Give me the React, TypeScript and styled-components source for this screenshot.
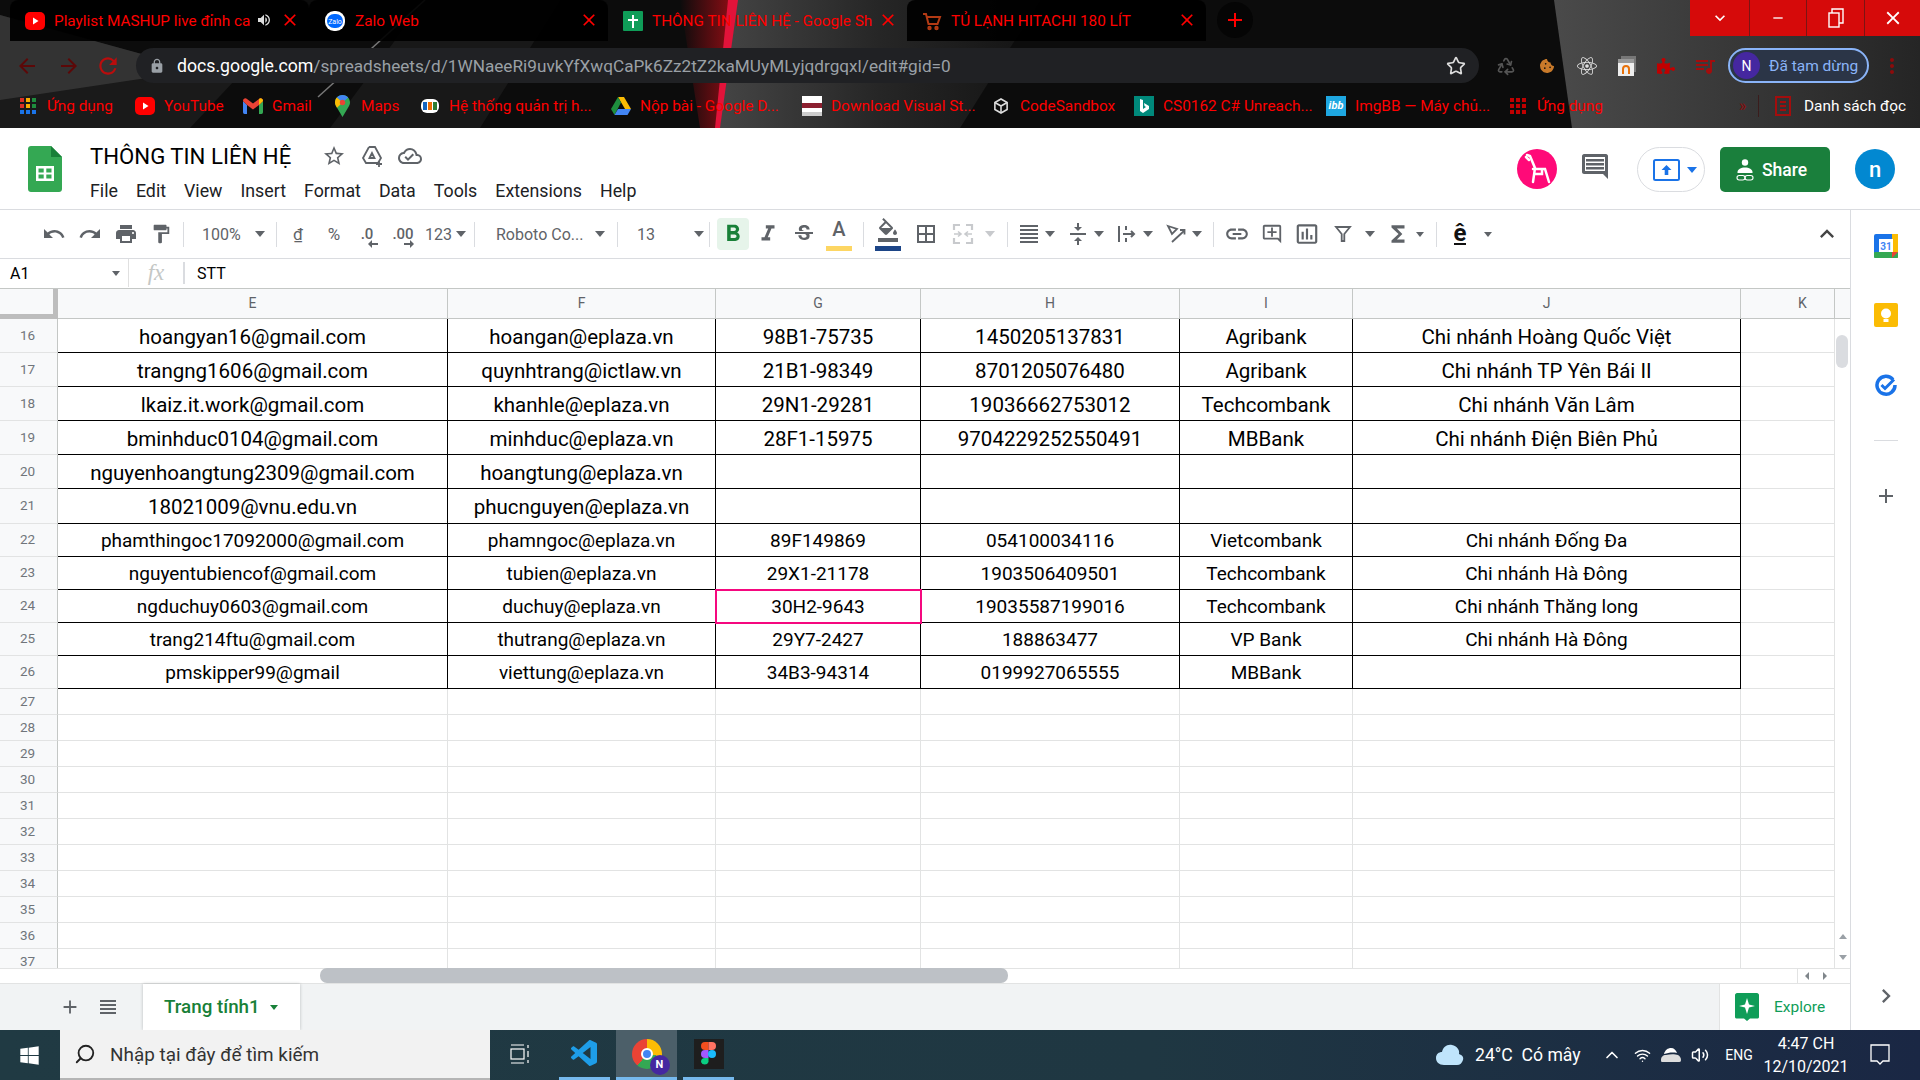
import React from 'react';
import styled, { createGlobalStyle } from 'styled-components';
import {
  MdAdd,
  MdArrowBack,
  MdArrowForward,
  MdBorderAll,
  MdChevronRight,
  MdClose,
  MdFormatAlignJustify,
  MdFormatBold,
  MdFormatColorFill,
  MdFormatItalic,
  MdFormatPaint,
  MdFunctions,
  MdInsertChartOutlined,
  MdKeyboardArrowDown,
  MdKeyboardArrowUp,
  MdLink,
  MdLock,
  MdMoreVert,
  MdOutlineAddComment,
  MdOutlineCloudDone,
  MdOutlineStickyNote2,
  MdPrint,
  MdQueueMusic,
  MdRedo,
  MdRefresh,
  MdRemove,
  MdStarBorder,
  MdStrikethroughS,
  MdUndo,
  MdVerticalAlignCenter,
  MdViewHeadline,
  MdVolumeUp,
} from 'react-icons/md';
import { FaWindows, FaPuzzlePiece, FaReact, FaCookieBite } from 'react-icons/fa';
import { VscVscode } from 'react-icons/vsc';
import { Search, Recycle, Wifi, Volume2, ChevronUp, Star } from 'lucide-react';

const GlobalStyle = createGlobalStyle`
  html, body {
    margin: 0;
    padding: 0;
    width: 1920px;
    height: 1080px;
    overflow: hidden;
    background: #fff;
    font-family: Roboto, "Liberation Sans", sans-serif;
  }
  * { box-sizing: border-box; }
`;

const RED = '#ff0000';
const GRAY = '#5f6368';

const Page = styled.div`
  width: 1920px;
  height: 1080px;
  display: flex;
  flex-direction: column;
`;

/* browser chrome */
const Chrome = styled.header`
  position: relative;
  height: 128px;
  flex: none;
  background: #0c0c0c;
  overflow: hidden;
`;

const Wallpaper = styled.svg`
  position: absolute;
  inset: 0;
`;

const TabStrip = styled.div`
  position: relative;
  display: flex;
  height: 48px;
  padding-left: 10px;
`;

const Tab = styled.div<{ $active?: boolean }>`
  width: 299px;
  height: 41px;
  padding-left: 15px;
  display: flex;
  align-items: center;
  gap: 9px;
  position: relative;
  color: ${RED};
  font-size: 15.3px;
  white-space: nowrap;
  border-radius: 8px 8px 0 0;
  background: ${p => (p.$active ? 'transparent' : 'rgba(0, 0, 0, 0.92)')};
`;

const TabTitle = styled.span<{ $w: number }>`
  width: ${p => p.$w}px;
  overflow: visible;
`;

const TabClose = styled(MdClose)`
  position: absolute;
  left: 270px;
  top: 10px;
  color: ${RED};
`;

const TabAudio = styled(MdVolumeUp)`
  position: absolute;
  left: 246px;
  top: 12px;
  color: #ddd;
`;

const NewTab = styled.div`
  width: 36px;
  height: 36px;
  margin: 2px 0 0 11px;
  border-radius: 50%;
  background: #050505;
  color: ${RED};
  display: flex;
  align-items: center;
  justify-content: center;
`;

const WindowControls = styled.div`
  margin-left: auto;
  height: 36px;
  display: flex;
  background: #d60a0a;
`;

const WindowButton = styled.div<{ $w: number }>`
  width: ${p => p.$w}px;
  border-left: 1px solid #7c1414;
  display: flex;
  align-items: center;
  justify-content: center;
  color: #fff;
  &:first-child { border-left: none; }
`;

const AddressRow = styled.div`
  position: relative;
  height: 35px;
  display: flex;
  align-items: center;
`;

const NavIcon = styled.div<{ $w: number; $c?: string; $ml?: number }>`
  width: ${p => p.$w}px;
  height: 35px;
  flex: none;
  margin-left: ${p => p.$ml || 0}px;
  display: flex;
  align-items: center;
  justify-content: center;
  color: ${p => p.$c || '#5c0808'};
`;

const Omnibox = styled.div`
  width: 1343px;
  height: 35px;
  margin-left: 8px;
  border-radius: 18px;
  background: #202124;
  display: flex;
  align-items: center;
  padding-left: 13px;
  color: #9aa0a6;
  font-size: 17.2px;
  white-space: nowrap;
`;

const Host = styled.span`
  color: #fff;
  font-size: 17.7px;
`;

const Url = styled.span`
  margin-left: 12px;
  flex: 1;
`;

const Profile = styled.div`
  width: 141px;
  height: 35px;
  margin-left: 5px;
  border: 2px solid #8ab4f8;
  border-radius: 18px;
  background: #2b3547;
  display: flex;
  align-items: center;
  gap: 9px;
  padding-left: 3px;
  color: #8ab4f8;
  font-size: 15.5px;
  white-space: nowrap;
`;

const ProfileAvatar = styled.span`
  width: 27px;
  height: 27px;
  border-radius: 50%;
  background: #4527a0;
  color: #fff;
  font-size: 14px;
  display: flex;
  align-items: center;
  justify-content: center;
`;

const BookmarkBar = styled.div`
  position: relative;
  height: 37px;
  margin-top: 4px;
  padding-left: 18px;
  display: flex;
  align-items: center;
`;

const Bookmark = styled.div<{ $w: number; $c?: string; $gap?: number }>`
  width: ${p => p.$w}px;
  flex: none;
  display: flex;
  align-items: center;
  gap: ${p => p.$gap || 9}px;
  color: ${p => p.$c || RED};
  font-size: 15.4px;
  white-space: nowrap;
`;

const FavBox = styled.span`
  width: 20px;
  height: 22px;
  flex: none;
  display: flex;
  align-items: center;
  justify-content: center;
`;

const AppsGrid = styled.span<{ $mono?: boolean }>`
  width: 16px;
  height: 16px;
  display: grid;
  grid-template-columns: repeat(3, 4px);
  grid-auto-rows: 4px;
  gap: 2px;
  i {
    display: block;
    background: ${p => (p.$mono ? '#c00000' : '#d93025')};
  }
  ${p =>
    !p.$mono &&
    `
    i:nth-child(3n + 2) { background: #f9ab00; }
    i:nth-child(3n) { background: #1e8e3e; }
    i:nth-child(n + 7) { background: #1a73e8; }
  `}
`;

const YouTubeBadge = () => (
  <svg width="20" height="20" viewBox="0 0 20 20">
    <rect x="0" y="1" width="20" height="18" rx="5" fill="#ff0000" />
    <path d="M8 6.500l5.500 3.500L8 13.500z" fill="#fff" />
  </svg>
);

const GmailIcon = () => (
  <svg width="20" height="16" viewBox="0 0 20 16">
    <path d="M0 3v11c0 1 .6 2 1.500 2H4V7z" fill="#4285f4" />
    <path d="M20 3v11c0 1-.6 2-1.500 2H16V7z" fill="#34a853" />
    <path d="M0 3l4 4 6 4.500L16 7l4-4c0-2.500-2.500-3.500-4-2l-6 4.500L4 1C2.500-.5 0 .5 0 3z" fill="#ea4335" />
    <path d="M16 1v6l4-4c0-2.500-2.500-3.500-4-2z" fill="#fbbc04" />
  </svg>
);

const MapsIcon = () => (
  <svg width="15" height="22" viewBox="0 0 15 22">
    <path d="M7.500 0C3.300 0 0 3.300 0 7.500c0 2 1 3.800 2 5.300L7.500 22l5.500-9.200c1-1.500 2-3.300 2-5.300C15 3.300 11.700 0 7.500 0z" fill="#34a853" />
    <path d="M7.500 0C5.200 0 3.200 1 1.800 2.600L7.500 7.500 13.200 2.600C11.800 1 9.800 0 7.500 0z" fill="#4285f4" />
    <path d="M0 7.500c0 2 1 3.800 2 5.300L7.500 7.500 1.800 2.600C.7 3.900 0 5.600 0 7.500z" fill="#fbbc04" />
    <circle cx="7.500" cy="7.500" r="2.700" fill="#ea4335" />
  </svg>
);

const FptIcon = () => (
  <svg width="20" height="18" viewBox="0 0 20 18">
    <rect x="1" y="2" width="18" height="14" rx="6" fill="#fff" />
    <rect x="3" y="5" width="4" height="8" fill="#1565c0" />
    <rect x="8" y="5" width="4" height="8" fill="#ef6c00" />
    <rect x="13" y="5" width="4" height="8" fill="#2e7d32" />
  </svg>
);

const DriveIcon = () => (
  <svg width="20" height="18" viewBox="0 0 20 18">
    <path d="M7 0h6l7 12h-6z" fill="#fbbc04" />
    <path d="M7 0l3 5.500L3.500 18 0 12z" fill="#1e8e3e" />
    <path d="M3.500 18L7 12h13l-3.500 6z" fill="#4285f4" />
  </svg>
);

const DownloadThumb = () => (
  <svg width="20" height="20" viewBox="0 0 20 20">
    <rect width="20" height="20" fill="#fff" />
    <rect y="7" width="20" height="5" fill="#8c2030" />
    <rect y="16" width="20" height="4" fill="#ccc" />
  </svg>
);

const SandboxIcon = () => (
  <svg width="14" height="16" viewBox="0 0 16 18" fill="none" stroke="#ddd" strokeWidth="1.800">
    <path d="M8 1l7 4v8l-7 4-7-4V5z" />
    <path d="M1 5l7 4 7-4M8 9v8" />
  </svg>
);

const BingIcon = () => (
  <svg width="20" height="20" viewBox="0 0 20 20">
    <rect width="20" height="20" fill="#00897b" />
    <path d="M6 3l3 1v9l3-2-1.500-1L10 7l5 3v3l-6 4-3-2z" fill="#fff" />
  </svg>
);

const IbbBadge = styled.span`
  width: 20px;
  height: 20px;
  background: #1ea7e1;
  color: #fff;
  font-size: 11px;
  font-style: italic;
  font-weight: 700;
  display: flex;
  align-items: center;
  justify-content: center;
`;

const ReadingIcon = () => (
  <svg width="18" height="20" viewBox="0 0 18 20" fill="none" stroke="#a30d0d" strokeWidth="2">
    <rect x="2" y="1" width="14" height="18" />
    <path d="M6 6h6M6 10h6M6 14h6" />
  </svg>
);

const RestoreIcon = () => (
  <svg width="16" height="20" viewBox="0 0 16 20" fill="none" stroke="#fff" strokeWidth="1.400">
    <rect x="1" y="5" width="10" height="14" />
    <path d="M4 5V1h11v14h-4" />
  </svg>
);

const ExtWindowIcon = () => (
  <svg width="18" height="20" viewBox="0 0 18 20">
    <rect x="3" y="0" width="15" height="16" fill="#777" />
    <rect x="0" y="3" width="16" height="17" fill="#eee" />
    <rect x="0" y="3" width="16" height="4" fill="#999" />
    <path d="M4 18v-5a4 4 0 0 1 8 0v5h-2v-5a2 2 0 0 0-4 0v5z" fill="#e8710a" />
  </svg>
);

const Overflow = styled.span`
  width: 19px;
  color: #8c0b0b;
  font-size: 16px;
`;

const BarDivider = styled.span`
  width: 1px;
  height: 22px;
  background: #3a1c1c;
  margin-right: 14px;
`;

const ChromeTabIcon = () => (
  <svg width="20" height="20" viewBox="0 0 20 20" fill="none" stroke="#b33a14" strokeWidth="2">
    <path d="M1 3h3l2.500 10h9L18 6H5" />
    <circle cx="7.500" cy="17" r="1.200" />
    <circle cx="14.500" cy="17" r="1.200" />
  </svg>
);

const ZaloIcon = () => (
  <svg width="22" height="22" viewBox="0 0 22 22">
    <rect x="1" y="1" width="20" height="20" rx="9" fill="#fff" />
    <rect x="3" y="4" width="16" height="14" rx="7" fill="#0068ff" />
    <text x="11" y="13.500" fontSize="7" fill="#fff" textAnchor="middle" fontFamily="Roboto">Zalo</text>
  </svg>
);

const SheetFavicon = () => (
  <svg width="20" height="20" viewBox="0 0 20 20">
    <rect width="20" height="20" rx="1" fill="#0f9d58" />
    <path d="M9 4h2v4h4v2h-4v7H9v-7H5V8h4z" fill="#fff" />
  </svg>
);

/* docs header */
const DocHeader = styled.div`
  height: 82px;
  flex: none;
  display: flex;
  padding: 18px 25px 0 28px;
  border-bottom: 1px solid #dadce0;
  background: #fff;
`;

const TitleColumn = styled.div`
  margin: -2px 0 0 28px;
  display: flex;
  flex-direction: column;
`;

const TitleRow = styled.div`
  height: 24px;
  display: flex;
  align-items: center;
  color: ${GRAY};
`;

const DocTitle = styled.span`
  width: 225px;
  color: #000;
  font-size: 22.2px;
  white-space: nowrap;
`;

const TitleIcon = styled.span`
  width: 38px;
  display: flex;
  justify-content: center;
`;

const MenuRow = styled.nav`
  display: flex;
  gap: 18px;
  margin-top: 12px;
  color: #202124;
  font-size: 17.8px;
`;

const HeaderActions = styled.div`
  margin-left: auto;
  display: flex;
  align-items: flex-start;
`;

const Avatar = styled.div<{ $bg: string }>`
  width: 40px;
  height: 40px;
  margin-top: 3px;
  border-radius: 50%;
  background: ${p => p.$bg};
  color: #fff;
  font-size: 22px;
  font-weight: 500;
  display: flex;
  align-items: center;
  justify-content: center;
`;

const CommentButton = styled.div`
  width: 32px;
  margin: 8px 0 0 25px;
  display: flex;
`;

const PresentButton = styled.div`
  width: 68px;
  height: 45px;
  margin: 1px 0 0 23px;
  border: 1px solid #dadce0;
  border-radius: 23px;
  display: flex;
  align-items: center;
  padding-left: 15px;
  gap: 7px;
`;

const ShareButton = styled.div`
  width: 110px;
  height: 45px;
  margin: 1px 25px 0 15px;
  border-radius: 5px;
  background: #1a7f3c;
  color: #fff;
  font-size: 17.5px;
  font-weight: 500;
  display: flex;
  align-items: center;
  padding-left: 16px;
  gap: 8px;
`;

/* main area */
const Main = styled.div`
  flex: 1;
  min-height: 0;
  display: flex;
`;

const Workspace = styled.div`
  width: 1851px;
  display: flex;
  flex-direction: column;
  border-right: 1px solid #dadce0;
`;

const Toolbar = styled.div`
  height: 49px;
  flex: none;
  display: flex;
  align-items: center;
  padding-left: 36px;
  border-bottom: 1px solid #dadce0;
  color: ${GRAY};
`;

const Tool = styled.div<{ $w: number; $ml?: number; $faint?: boolean }>`
  width: ${p => p.$w}px;
  margin-left: ${p => p.$ml || 0}px;
  height: 32px;
  flex: none;
  position: relative;
  display: flex;
  align-items: center;
  justify-content: center;
  color: ${p => (p.$faint ? '#c8cacd' : GRAY)};
  font-size: 17px;
`;

const BoldTool = styled(Tool)`
  background: #e6f4ea;
  border-radius: 4px;
  color: #188038;
`;

const Sep = styled.span<{ $ml?: number }>`
  width: 1px;
  height: 25px;
  flex: none;
  margin-left: ${p => p.$ml || 0}px;
  background: #dadce0;
`;

const Select = styled.div<{ $w: number; $pl: number; $pr: number }>`
  width: ${p => p.$w}px;
  padding: 0 ${p => p.$pr}px 0 ${p => p.$pl}px;
  flex: none;
  display: flex;
  align-items: center;
  justify-content: space-between;
  color: ${GRAY};
  font-size: 16px;
  white-space: nowrap;
`;

const Caret = styled.span<{ $small?: boolean; $light?: boolean; $c?: string }>`
  width: 0;
  height: 0;
  flex: none;
  border-style: solid;
  border-color: ${p => p.$c || (p.$light ? '#c8cacd' : GRAY)} transparent transparent;
  border-width: ${p => (p.$small ? '5px 4px 0' : '6px 5.5px 0')};
`;

const CaretTool = styled.div<{ $ml?: number }>`
  width: 8px;
  margin-left: ${p => p.$ml || 0}px;
  flex: none;
  display: flex;
  justify-content: center;
`;

const ArrowDecimal = styled.span`
  position: relative;
  font-size: 15px;
  font-weight: 500;
`;

const DecimalArrow = styled.svg`
  position: absolute;
  left: 53%;
  bottom: 2px;
`;

const ColorBar = styled.span<{ $c: string }>`
  position: absolute;
  left: 50%;
  bottom: -1px;
  width: 26px;
  height: 5px;
  margin-left: -13px;
  background: ${p => p.$c};
`;

const TextColor = styled.span`
  position: relative;
  top: -5px;
  font-size: 20px;
  font-weight: 500;
`;

const InputTool = styled.span`
  color: #111;
  font-size: 24px;
  font-weight: 700;
  border-bottom: 2px solid #111;
  line-height: 20px;
`;

const CollapseTool = styled.div`
  margin-left: auto;
  width: 40px;
  display: flex;
  justify-content: center;
  margin-right: 3px;
  color: #444;
`;

const FormulaBar = styled.div`
  height: 30px;
  flex: none;
  display: flex;
  align-items: center;
  padding-bottom: 1px;
  border-bottom: 1px solid #c4c7c5;
  font-size: 16px;
  color: #000;
`;

const NameBox = styled.div`
  width: 129px;
  height: 100%;
  padding: 0 8px 0 10px;
  display: flex;
  align-items: center;
  justify-content: space-between;
  border-right: 1px solid #e0e0e0;
`;

const FxMark = styled.span`
  width: 54px;
  text-align: center;
  color: #c4c7c5;
  font-family: "Liberation Serif", serif;
  font-size: 23px;
  font-style: italic;
`;

const FxDivider = styled.span`
  width: 2px;
  height: 22px;
  background: #dadce0;
  margin-right: 12px;
`;

const GridArea = styled.div`
  height: 679px;
  flex: none;
  display: flex;
`;

const SheetColumn = styled.div`
  width: 1835px;
  flex: none;
  overflow: hidden;
`;

const Row = styled.div<{ $h: number }>`
  height: ${p => p.$h}px;
  display: grid;
  grid-template-columns: 58px 390px 268px 205px 259px 173px 388px 94px;
`;

const Corner = styled.div`
  background: #f8f9fa;
  border-right: 5px solid #bdbdbd;
  border-bottom: 5px solid #bdbdbd;
`;

const ColHead = styled.div<{ $shift?: number }>`
  background: #f8f9fa;
  border-right: 1px solid #c4c7c5;
  border-bottom: 1px solid #c4c7c5;
  color: ${GRAY};
  font-size: 14px;
  display: flex;
  align-items: center;
  justify-content: center;
  padding-bottom: 1px;
  padding-left: ${p => p.$shift || 0}px;
`;

const RowHead = styled.div`
  background: #f8f9fa;
  border-right: 1px solid #c4c7c5;
  border-bottom: 1px solid #e2e3e3;
  color: #70757a;
  font-size: 13.5px;
  display: flex;
  align-items: center;
  justify-content: center;
  padding: 0 2px 2px 0;
`;

const Cell = styled.div<{ $line?: boolean; $small?: boolean; $picked?: boolean }>`
  position: relative;
  border-right: 1px solid ${p => (p.$line ? '#000' : '#e2e3e3')};
  border-bottom: ${p => (p.$line ? '1px solid #000' : '1px solid #e2e3e3')};
  outline: ${p => (p.$picked ? '2px solid #f5087f' : 'none')};
  outline-offset: -1px;
  z-index: ${p => (p.$picked ? 1 : 0)};
  color: #000;
  font-size: ${p => (p.$small ? 19 : 20.5)}px;
  display: flex;
  align-items: center;
  justify-content: center;
  padding-top: ${p => (p.$small ? 0 : 2)}px;
  white-space: nowrap;
`;

const VScroll = styled.div`
  width: 15px;
  flex: none;
  display: flex;
  flex-direction: column;
`;

const VHead = styled.div`
  height: 30px;
  flex: none;
  background: #f8f9fa;
  border-bottom: 1px solid #c4c7c5;
`;

const VTrack = styled.div`
  flex: 1;
  display: flex;
  flex-direction: column;
`;

const VThumb = styled.div`
  width: 12px;
  height: 33px;
  margin: 16px 0 0 1px;
  border-radius: 6px;
  background: #dadce0;
`;

const VArrows = styled.div`
  margin-top: auto;
  display: flex;
  flex-direction: column;
  align-items: center;
  gap: 16px;
  padding-bottom: 8px;
`;

const HScroll = styled.div`
  height: 15px;
  flex: none;
  display: flex;
  border-top: 1px solid #e2e3e3;
`;

const HThumb = styled.div`
  width: 688px;
  height: 15px;
  margin: -1px 0 0 320px;
  border-radius: 7px;
  background: #bdc1c6;
`;

const HArrows = styled.div`
  margin-left: auto;
  width: 53px;
  display: flex;
  align-items: center;
  border-left: 1px solid #e2e3e3;
  color: #80868b;
`;

const HArrowBox = styled.div`
  width: 18px;
  display: flex;
  justify-content: center;
`;

const ArrowH = styled.span<{ $left?: boolean }>`
  width: 0;
  height: 0;
  border-style: solid;
  border-color: transparent;
  border-width: 4px 0 4px 4px;
  border-left-color: #80868b;
  transform: ${p => (p.$left ? 'rotate(180deg)' : 'none')};
`;

const SheetBar = styled.div`
  flex: 1;
  display: flex;
  background: #f1f3f4;
  border-top: 1px solid #e2e3e3;
  color: ${GRAY};
`;

const SheetTool = styled.div<{ $w: number }>`
  width: ${p => p.$w}px;
  display: flex;
  align-items: center;
  justify-content: flex-end;
`;

const SheetTab = styled.div`
  width: 157px;
  margin-left: 23px;
  background: #fff;
  box-shadow: 0 0 3px rgba(60, 64, 67, 0.3);
  display: flex;
  align-items: center;
  padding-left: 21px;
  gap: 10px;
  color: #188038;
  font-size: 18.8px;
  font-weight: 500;
  white-space: nowrap;
`;

const ExploreBox = styled.div`
  margin-left: auto;
  width: 131px;
  background: #fff;
  border-left: 1px solid #e2e3e3;
  display: flex;
  align-items: center;
  padding-left: 15px;
  gap: 15px;
  color: #0f9d58;
  font-size: 15.5px;
`;

const SidePanel = styled.aside`
  flex: 1;
  display: flex;
  flex-direction: column;
  align-items: center;
  padding-top: 24px;
  color: #5f6368;
`;

const SideIcon = styled.div<{ $mt: number }>`
  margin-top: ${p => p.$mt}px;
  display: flex;
`;

const SideRule = styled.div`
  width: 24px;
  height: 1px;
  margin-top: 43px;
  background: #dadce0;
`;

const SideChevron = styled.div`
  margin-top: auto;
  padding-bottom: 20px;
  display: flex;
`;

/* windows taskbar */
const Taskbar = styled.footer`
  height: 50px;
  flex: none;
  display: flex;
  align-items: center;
  background: linear-gradient(90deg, #203a43 0%, #1f3742 60%, #1a2744 100%);
  color: #fff;
`;

const StartButton = styled.div`
  width: 60px;
  display: flex;
  justify-content: center;
  padding-right: 2px;
`;

const SearchBox = styled.div`
  width: 430px;
  height: 50px;
  background: #f2f2f2;
  border-bottom: 2px solid #b5b5b5;
  display: flex;
  align-items: center;
  gap: 14px;
  padding-left: 14px;
  color: #333;
  font-size: 18.9px;
  white-space: nowrap;
`;

const TaskButton = styled.div<{ $on?: boolean; $w: number; $ml?: number; $bar?: boolean }>`
  width: ${p => p.$w}px;
  height: 50px;
  margin-left: ${p => p.$ml || 0}px;
  background: ${p => (p.$on ? '#4c5f69' : 'transparent')};
  border-bottom: 3px solid ${p => (p.$bar ? '#76b9ed' : 'transparent')};
  display: flex;
  align-items: center;
  justify-content: center;
`;

const ChromeLogo = styled.div`
  position: relative;
  width: 30px;
  height: 30px;
  border-radius: 50%;
  background: conic-gradient(#fbbc04 0 100deg, #34a853 100deg 220deg, #ea4335 220deg 360deg);
  &::before {
    content: '';
    position: absolute;
    inset: 9px;
    border-radius: 50%;
    background: #4285f4;
    border: 2px solid #fff;
  }
`;

const ChromeBadge = styled.span`
  position: absolute;
  right: -8px;
  bottom: -6px;
  width: 20px;
  height: 20px;
  border-radius: 50%;
  background: #4527a0;
  font-size: 11px;
  font-weight: 700;
  display: flex;
  align-items: center;
  justify-content: center;
`;

const FigmaTile = styled.div`
  width: 30px;
  height: 30px;
  background: #1e1e1e;
  display: flex;
  align-items: center;
  justify-content: center;
`;

const Tray = styled.div`
  margin-left: auto;
  display: flex;
  align-items: center;
  font-size: 17.6px;
`;

const TrayItem = styled.div<{ $w: number; $center?: boolean }>`
  width: ${p => p.$w}px;
  display: flex;
  align-items: center;
  justify-content: ${p => (p.$center ? 'center' : 'flex-start')};
  white-space: nowrap;
`;

const EngLabel = styled(TrayItem)`
  font-size: 14px;
`;

const Clock = styled.div`
  width: 86px;
  display: flex;
  flex-direction: column;
  align-items: center;
  gap: 6px;
  font-size: 16px;
  line-height: 17px;
  white-space: nowrap;
`;

const BOOKMARKS: { w: number; label: string; icon: React.ReactNode; c?: string }[] = [
  { w: 117, label: 'Ứng dụng', icon: <AppsGrid><i /><i /><i /><i /><i /><i /><i /><i /><i /></AppsGrid> },
  { w: 108, label: 'YouTube', icon: <YouTubeBadge /> },
  { w: 89, label: 'Gmail', icon: <GmailIcon /> },
  { w: 88, label: 'Maps', icon: <MapsIcon /> },
  { w: 191, label: 'Hệ thống quản trị h...', icon: <FptIcon /> },
  { w: 191, label: 'Nộp bài - Google D...', icon: <DriveIcon /> },
  { w: 189, label: 'Download Visual St...', icon: <DownloadThumb /> },
  { w: 143, label: 'CodeSandbox', icon: <SandboxIcon /> },
  { w: 192, label: 'CS0162 C# Unreach...', icon: <BingIcon /> },
  { w: 182, label: 'ImgBB — Máy chủ...', icon: <IbbBadge>ibb</IbbBadge> },
  { w: 231, label: 'Ứng dụng', icon: <AppsGrid $mono><i /><i /><i /><i /><i /><i /><i /><i /><i /></AppsGrid> },
];

const MENU = ['File', 'Edit', 'View', 'Insert', 'Format', 'Data', 'Tools', 'Extensions', 'Help'];
const COLUMNS = ['E', 'F', 'G', 'H', 'I', 'J', 'K'];

const DATA: [number, string[]][] = [
  [16, ['hoangyan16@gmail.com', 'hoangan@eplaza.vn', '98B1-75735', '1450205137831', 'Agribank', 'Chi nhánh Hoàng Quốc Việt']],
  [17, ['trangng1606@gmail.com', 'quynhtrang@ictlaw.vn', '21B1-98349', '8701205076480', 'Agribank', 'Chi nhánh TP Yên Bái II']],
  [18, ['lkaiz.it.work@gmail.com', 'khanhle@eplaza.vn', '29N1-29281', '19036662753012', 'Techcombank', 'Chi nhánh Văn Lâm']],
  [19, ['bminhduc0104@gmail.com', 'minhduc@eplaza.vn', '28F1-15975', '9704229252550491', 'MBBank', 'Chi nhánh Điện Biên Phủ']],
  [20, ['nguyenhoangtung2309@gmail.com', 'hoangtung@eplaza.vn', '', '', '', '']],
  [21, ['18021009@vnu.edu.vn', 'phucnguyen@eplaza.vn', '', '', '', '']],
  [22, ['phamthingoc17092000@gmail.com', 'phamngoc@eplaza.vn', '89F149869', '054100034116', 'Vietcombank', 'Chi nhánh Đống Đa']],
  [23, ['nguyentubiencof@gmail.com', 'tubien@eplaza.vn', '29X1-21178', '1903506409501', 'Techcombank', 'Chi nhánh Hà Đông']],
  [24, ['ngduchuy0603@gmail.com', 'duchuy@eplaza.vn', '30H2-9643', '19035587199016', 'Techcombank', 'Chi nhánh Thăng long']],
  [25, ['trang214ftu@gmail.com', 'thutrang@eplaza.vn', '29Y7-2427', '188863477', 'VP Bank', 'Chi nhánh Hà Đông']],
  [26, ['pmskipper99@gmail', 'viettung@eplaza.vn', '34B3-94314', '0199927065555', 'MBBank', '']],
];

const rowHeight = (n: number) => (n === 21 ? 35 : n <= 20 ? 34 : 33);
const EMPTY_ROWS = [27, 28, 29, 30, 31, 32, 33, 34, 35, 36, 37];

const SheetsLogo = () => (
  <svg width="34" height="46" viewBox="0 0 34 46">
    <path d="M3 0h20l11 11v32c0 1.700-1.300 3-3 3H3c-1.700 0-3-1.300-3-3V3c0-1.700 1.300-3 3-3z" fill="#34a853" />
    <path d="M23 0l11 11H23z" fill="#188038" />
    <path d="M8 20h18v15H8zm2.500 2.500v4h5.200v-4zm7.800 0v4h5.200v-4zm-7.800 6v4h5.200v-4zm7.800 0v4h5.200v-4z" fill="#fff" fillRule="evenodd" />
  </svg>
);

const MoveIcon = () => (
  <svg width="24" height="24" viewBox="0 0 24 24" fill="none" stroke={GRAY} strokeWidth="1.800">
    <path d="M9 3h6l6 11-3 5h-5M9 3L3 14l3 5h7M9.500 14l2.500-5 2.500 5z" />
    <path d="M19 17v6M16 20h6" />
  </svg>
);

const GiraffeIcon = () => (
  <svg width="30" height="32" viewBox="0 0 30 32" fill="none" stroke="#fff" strokeWidth="2.500" strokeLinecap="round">
    <path d="M5 2l3 1 5 12-2 14M11 16h12l4 13M20 17v4h-6" />
    <path d="M4 4l3 3" />
  </svg>
);

const CommentIcon = () => (
  <svg width="26" height="25" viewBox="0 0 26 25">
    <path d="M2 0h22c1 0 2 1 2 2v23l-5-5H2c-1 0-2-1-2-2V2C0 1 1 0 2 0z" fill={GRAY} />
    <rect x="3" y="3" width="20" height="14" fill="#fff" />
    <rect x="4" y="5" width="18" height="2.500" fill={GRAY} />
    <rect x="4" y="9" width="18" height="2.500" fill={GRAY} />
    <rect x="4" y="13" width="18" height="2.500" fill={GRAY} />
  </svg>
);

const PresentIcon = () => (
  <svg width="27" height="22" viewBox="0 0 27 22" fill="none">
    <rect x="1" y="1" width="25" height="20" rx="1.500" stroke="#1a73e8" strokeWidth="2" />
    <path d="M13.500 6l5 5h-3.200v5h-3.600v-5H8.500z" fill="#1a73e8" />
  </svg>
);

const ShareIcon = () => (
  <svg width="18" height="22" viewBox="0 0 18 22" fill="none">
    <circle cx="9" cy="3.500" r="3.200" fill="#fff" />
    <path d="M1.500 13c0-2.500 3.500-4.500 7.500-4.500s7.500 2 7.500 4.500v1h-15z" fill="#fff" />
    <rect x="1" y="16.500" width="8" height="4.500" rx="2.200" stroke="#fff" strokeWidth="1.100" />
    <rect x="9" y="16.500" width="8" height="4.500" rx="2.200" stroke="#fff" strokeWidth="1.100" />
  </svg>
);

const MergeIcon = () => (
  <svg width="24" height="24" viewBox="0 0 24 24" fill="none" stroke="#c8cacd" strokeWidth="2.200">
    <path d="M3 8V3h6M15 3h6v5M21 16v5h-6M9 21H3v-5" />
    <path d="M3 12h6M7 9.500l3 2.500-3 2.500M21 12h-6M17 9.500L14 12l3 2.500" strokeWidth="1.600" />
  </svg>
);

const WrapIcon = () => (
  <svg width="20" height="20" viewBox="0 0 20 20" fill="none" stroke={GRAY} strokeWidth="2">
    <path d="M2 2v16" />
    <path d="M9 2v4M9 14v4" />
    <path d="M6 10h11" />
    <path d="M14 7l3 3-3 3" />
  </svg>
);

const RotateIcon = () => (
  <svg width="20" height="20" viewBox="0 0 20 20" fill="none" stroke={GRAY} strokeWidth="1.800">
    <path d="M2 2l9 3-5 5z" />
    <path d="M6 18L18 7" />
    <path d="M14 6h4.500v4.500" />
  </svg>
);

const FilterIcon = () => (
  <svg width="18" height="18" viewBox="0 0 18 18" fill="none" stroke={GRAY} strokeWidth="1.800">
    <path d="M2 2h14l-5.700 7v7H7.700V9z" />
  </svg>
);

const CalendarIcon = () => (
  <svg width="24" height="24" viewBox="0 0 24 24">
    <rect width="24" height="24" rx="2" fill="#1a73e8" />
    <rect x="18" y="0" width="6" height="24" fill="#fbbc04" />
    <rect y="18" width="24" height="6" rx="1" fill="#34a853" />
    <path d="M18 24l6-6h-6z" fill="#ea4335" />
    <rect x="5" y="5" width="14" height="13" fill="#fff" />
    <text x="12" y="15.500" fontSize="10" fontWeight="700" fill="#4285f4" textAnchor="middle" fontFamily="Roboto">31</text>
  </svg>
);

const KeepIcon = () => (
  <svg width="24" height="24" viewBox="0 0 24 24">
    <rect width="24" height="24" rx="2" fill="#fbbc04" />
    <circle cx="12" cy="10.500" r="5" fill="#fff" />
    <rect x="9.500" y="16" width="5" height="3" fill="#fff" />
  </svg>
);

const TasksIcon = () => (
  <svg width="24" height="24" viewBox="0 0 24 24" fill="none" stroke="#1a73e8" strokeWidth="3.500">
    <path d="M19 6.500A9 9 0 1 0 21 12" />
    <path d="M7.500 12l3.500 3.500 9-9" strokeWidth="3" />
  </svg>
);

const ExploreIcon = () => (
  <svg width="24" height="28" viewBox="0 0 24 28">
    <path d="M2 0h20c1 0 2 1 2 2v22c0 1-1 1.500-2 1.500h-7L12 28l-3-2.500H2c-1 0-2-.5-2-1.500V2C0 1 1 0 2 0z" fill="#0f9d58" />
    <path d="M12 5l2 6.500 6 1.500-6 1.500-2 6.500-2-6.500L4 13l6-1.500z" fill="#fff" />
  </svg>
);

const CloudTray = () => (
  <svg width="28" height="24" viewBox="0 0 28 24">
    <path d="M8 22C3 22 0 19 0 15s3-6 6-6c1-5 5-8 10-7 5 1 8 5 7 9 3 1 5 3 4 6-1 3-3 5-6 5z" fill="#bfe4fb" />
  </svg>
);

const OneDriveIcon = () => (
  <svg width="20" height="16" viewBox="0 0 20 16">
    <path d="M3 7c1-4 4-6 7-6 3 0 5 2 6 5-5-1-9 0-13 1z" fill="#fff" />
    <path d="M1 15c-1 0-1-1-1-2 0-3 2-5 5-5 4-1 9-1 12 0 2 1 3 3 3 5s-1 2-3 2z" fill="#ddd" />
  </svg>
);

const TaskViewIcon = () => (
  <svg width="20" height="24" viewBox="0 0 20 24" fill="none" stroke="#fff" strokeWidth="1.200">
    <path d="M1 3h13M1 21h13" />
    <rect x="1" y="7" width="13" height="10" />
    <path d="M18 3v3M18 9v6M18 18v3" />
  </svg>
);

const FigmaMark = () => (
  <svg width="15" height="24" viewBox="0 0 15 24">
    <path d="M0 4a4 4 0 0 1 4-4h3.500v8H4a4 4 0 0 1-4-4z" fill="#f24e1e" />
    <path d="M7.500 0H11a4 4 0 0 1 0 8H7.500z" fill="#ff7262" />
    <path d="M0 12a4 4 0 0 1 4-4h3.500v8H4a4 4 0 0 1-4-4z" fill="#a259ff" />
    <circle cx="11" cy="12" r="4" fill="#1abcfe" />
    <path d="M0 20a4 4 0 0 1 4-4h3.500v4a4 4 0 0 1-7.500 0z" fill="#0acf83" />
  </svg>
);

const NotifyIcon = () => (
  <svg width="20" height="24" viewBox="0 0 20 24" fill="none" stroke="#fff" strokeWidth="1.300">
    <path d="M1 2h18v16h-6l-3 3-3-3H1z" />
  </svg>
);

export default function App() {
  return (
    <Page>
      <GlobalStyle />
      <Chrome>
        <Wallpaper width="1920" height="128" viewBox="0 0 1920 128">
          <defs>
            <linearGradient id="rightGray" x1="0" x2="1" y1="0" y2="0">
              <stop offset="0" stopColor="#4a4a4a" />
              <stop offset="1" stopColor="#252525" />
            </linearGradient>
            <linearGradient id="midGray" x1="0" x2="1" y1="0" y2="0">
              <stop offset="0" stopColor="#454545" />
              <stop offset="0.5" stopColor="#262626" />
              <stop offset="1" stopColor="#131313" />
            </linearGradient>
            <linearGradient id="glow" x1="0" x2="1" y1="0" y2="0">
              <stop offset="0" stopColor="#0c0c0c" />
              <stop offset="1" stopColor="#8c0d14" />
            </linearGradient>
          </defs>
          <polygon points="0,15 235,80 190,128 0,128" fill="#1a1a1a" />
          <polygon points="0,15 200,70 0,100" fill="#333" />
          <polygon points="330,128 425,0 560,0 480,128" fill="#181818" />
          <line x1="425" y1="0" x2="318" y2="97" stroke="#777" strokeWidth="1.500" />
          <polygon points="680,0 732,0 716,128 700,128" fill="url(#glow)" />
          <polygon points="736,0 1040,0 960,128 718,128" fill="url(#midGray)" />
          <polygon points="728,0 738,0 720,128 715,128" fill="#e2133a" />
          <polygon points="1554,0 1920,0 1920,128 1572,128" fill="url(#rightGray)" />
        </Wallpaper>
        <TabStrip>
          <Tab>
            <YouTubeBadge />
            <TabTitle $w={190}>Playlist MASHUP live đỉnh ca</TabTitle>
            <TabAudio size={16} />
            <TabClose size={20} />
          </Tab>
          <Tab>
            <ZaloIcon />
            <TabTitle $w={200}>Zalo Web</TabTitle>
            <TabClose size={20} />
          </Tab>
          <Tab $active>
            <SheetFavicon />
            <TabTitle $w={217}>THÔNG TIN LIÊN HỆ - Google Sh</TabTitle>
            <TabClose size={20} />
          </Tab>
          <Tab>
            <ChromeTabIcon />
            <TabTitle $w={220}>TỦ LẠNH HITACHI 180 LÍT</TabTitle>
            <TabClose size={20} />
          </Tab>
          <NewTab><MdAdd size={24} /></NewTab>
          <WindowControls>
            <WindowButton $w={59}><MdKeyboardArrowDown size={20} /></WindowButton>
            <WindowButton $w={57}><MdRemove size={16} /></WindowButton>
            <WindowButton $w={58}><RestoreIcon /></WindowButton>
            <WindowButton $w={56}><MdClose size={22} /></WindowButton>
          </WindowControls>
        </TabStrip>
        <AddressRow>
          <NavIcon $w={48} $ml={3}><MdArrowBack size={24} /></NavIcon>
          <NavIcon $w={36}><MdArrowForward size={24} /></NavIcon>
          <NavIcon $w={41} $c="#b90d0d"><MdRefresh size={26} /></NavIcon>
          <Omnibox>
            <MdLock size={16} color="#9aa0a6" />
            <Url><Host>docs.google.com</Host>/spreadsheets/d/1WNaeeRi9uvkYfXwqCaPk6Zz2tZ2kaMUyMLyjqdrgqxl/edit#gid=0</Url>
            <NavIcon $w={46} $c="#ddd"><Star size={20} /></NavIcon>
          </Omnibox>
          <NavIcon $w={46} $c="#555" $ml={4}><Recycle size={20} /></NavIcon>
          <NavIcon $w={36} $c="#c97a2a"><FaCookieBite size={14} /></NavIcon>
          <NavIcon $w={43} $c="#ddd"><FaReact size={20} /></NavIcon>
          <NavIcon $w={37}><ExtWindowIcon /></NavIcon>
          <NavIcon $w={42} $c="#c00000"><FaPuzzlePiece size={18} /></NavIcon>
          <NavIcon $w={36} $c="#a30d0d"><MdQueueMusic size={24} /></NavIcon>
          <Profile><ProfileAvatar>N</ProfileAvatar>Đã tạm dừng</Profile>
          <NavIcon $w={46} $c="#8c0b0b"><MdMoreVert size={24} /></NavIcon>
        </AddressRow>
        <BookmarkBar>
          {BOOKMARKS.map(b => (
            <Bookmark key={b.w + b.label} $w={b.w}>
              <FavBox>{b.icon}</FavBox>
              {b.label}
            </Bookmark>
          ))}
          <Overflow>»</Overflow>
          <BarDivider />
          <Bookmark $w={130} $c="#fff" $gap={11}><FavBox><ReadingIcon /></FavBox>Danh sách đọc</Bookmark>
        </BookmarkBar>
      </Chrome>

      <DocHeader>
        <SheetsLogo />
        <TitleColumn>
          <TitleRow>
            <DocTitle>THÔNG TIN LIÊN HỆ</DocTitle>
            <TitleIcon><MdStarBorder size={24} /></TitleIcon>
            <TitleIcon><MoveIcon /></TitleIcon>
            <TitleIcon><MdOutlineCloudDone size={24} /></TitleIcon>
          </TitleRow>
          <MenuRow>
            {MENU.map(m => <span key={m}>{m}</span>)}
          </MenuRow>
        </TitleColumn>
        <HeaderActions>
          <Avatar $bg="#ff0a78"><GiraffeIcon /></Avatar>
          <CommentButton><CommentIcon /></CommentButton>
          <PresentButton><PresentIcon /><Caret $c="#1a73e8" /></PresentButton>
          <ShareButton><ShareIcon />Share</ShareButton>
          <Avatar $bg="#0288d1">n</Avatar>
        </HeaderActions>
      </DocHeader>

      <Main>
        <Workspace>
          <Toolbar>
            <Tool $w={36}><MdUndo size={24} /></Tool>
            <Tool $w={36}><MdRedo size={24} /></Tool>
            <Tool $w={35}><MdPrint size={24} /></Tool>
            <Tool $w={35}><MdFormatPaint size={22} /></Tool>
            <Sep $ml={5} />
            <Select $w={92} $pl={18} $pr={11}>100%<Caret /></Select>
            <Sep />
            <Tool $w={42}><u>₫</u></Tool>
            <Tool $w={30}>%</Tool>
            <Tool $w={36}>
              <ArrowDecimal>.0</ArrowDecimal>
              <DecimalArrow width="10" height="8" viewBox="0 0 10 8" fill={GRAY}><path d="M0 4l4-4v3h6v2H4v3z" /></DecimalArrow>
            </Tool>
            <Tool $w={36}>
              <ArrowDecimal>.00</ArrowDecimal>
              <DecimalArrow width="10" height="8" viewBox="0 0 10 8" fill={GRAY}><path d="M10 4L6 0v3H0v2h6v3z" /></DecimalArrow>
            </Tool>
            <Select $w={53} $pl={4} $pr={8}>123<Caret /></Select>
            <Sep />
            <Select $w={142} $pl={21} $pr={12}>Roboto Co...<Caret /></Select>
            <Sep />
            <Select $w={91} $pl={19} $pr={5}>13<Caret /></Select>
            <Sep />
            <BoldTool $w={32} $ml={7}><MdFormatBold size={28} /></BoldTool>
            <Tool $w={38}><MdFormatItalic size={26} /></Tool>
            <Tool $w={33}><MdStrikethroughS size={24} /></Tool>
            <Tool $w={38}><TextColor>A</TextColor><ColorBar $c="#fdd663" /></Tool>
            <Sep $ml={5} />
            <Tool $w={48}><MdFormatColorFill size={24} style={{ marginTop: -8 }} /><ColorBar $c="#1c4587" /></Tool>
            <Tool $w={28}><MdBorderAll size={24} /></Tool>
            <Tool $w={46}><MergeIcon /></Tool>
            <CaretTool><Caret $light /></CaretTool>
            <Sep $ml={13} />
            <Tool $w={34} $ml={4}><MdFormatAlignJustify size={24} /></Tool>
            <CaretTool><Caret /></CaretTool>
            <Tool $w={34} $ml={7}><MdVerticalAlignCenter size={24} /></Tool>
            <CaretTool><Caret /></CaretTool>
            <Tool $w={34} $ml={7}><WrapIcon /></Tool>
            <CaretTool><Caret /></CaretTool>
            <Tool $w={34} $ml={7}><RotateIcon /></Tool>
            <CaretTool><Caret /></CaretTool>
            <Sep $ml={12} />
            <Tool $w={46}><MdLink size={26} /></Tool>
            <Tool $w={24}><MdOutlineAddComment size={22} /></Tool>
            <Tool $w={46}><MdInsertChartOutlined size={26} /></Tool>
            <Tool $w={26}><FilterIcon /></Tool>
            <CaretTool $ml={10}><Caret /></CaretTool>
            <Tool $w={36} $ml={6}><MdFunctions size={26} /></Tool>
            <CaretTool><Caret $small /></CaretTool>
            <Sep $ml={12} />
            <Tool $w={46}><InputTool>ê</InputTool></Tool>
            <CaretTool $ml={1}><Caret $small /></CaretTool>
            <CollapseTool><MdKeyboardArrowUp size={28} /></CollapseTool>
          </Toolbar>
          <FormulaBar>
            <NameBox>A1<Caret $small /></NameBox>
            <FxMark>fx</FxMark>
            <FxDivider />
            STT
          </FormulaBar>
          <GridArea>
            <SheetColumn>
              <Row $h={30}>
                <Corner />
                {COLUMNS.map(c => <ColHead key={c} $shift={c === 'K' ? 30 : 0}>{c}</ColHead>)}
              </Row>
              {DATA.map(([n, cells]) => (
                <Row key={n} $h={rowHeight(n)}>
                  <RowHead>{n}</RowHead>
                  {cells.map((text, i) => (
                    <Cell key={i} $line $small={n >= 22} $picked={n === 24 && i === 2}>{text}</Cell>
                  ))}
                  <Cell />
                </Row>
              ))}
              {EMPTY_ROWS.map(n => (
                <Row key={n} $h={26}>
                  <RowHead>{n}</RowHead>
                  {COLUMNS.map(c => <Cell key={c} />)}
                </Row>
              ))}
            </SheetColumn>
            <VScroll>
              <VHead />
              <VTrack>
                <VThumb />
                <VArrows>
                  <Caret $small $c="#9aa0a6" style={{ transform: 'rotate(180deg)' }} />
                  <Caret $small $c="#9aa0a6" />
                </VArrows>
              </VTrack>
            </VScroll>
          </GridArea>
          <HScroll>
            <HThumb />
            <HArrows>
              <HArrowBox><ArrowH $left /></HArrowBox>
              <HArrowBox><ArrowH /></HArrowBox>
            </HArrows>
          </HScroll>
          <SheetBar>
            <SheetTool $w={81}><MdAdd size={22} /></SheetTool>
            <SheetTool $w={39}><MdViewHeadline size={24} /></SheetTool>
            <SheetTab>Trang tính1<Caret $small $c="#188038" /></SheetTab>
            <ExploreBox><ExploreIcon />Explore</ExploreBox>
          </SheetBar>
        </Workspace>
        <SidePanel>
          <SideIcon $mt={0}><CalendarIcon /></SideIcon>
          <SideIcon $mt={45}><KeepIcon /></SideIcon>
          <SideIcon $mt={46}><TasksIcon /></SideIcon>
          <SideRule />
          <SideIcon $mt={43}><MdAdd size={24} /></SideIcon>
          <SideChevron><MdChevronRight size={28} /></SideChevron>
        </SidePanel>
      </Main>

      <Taskbar>
        <StartButton><FaWindows size={21} /></StartButton>
        <SearchBox><Search size={22} color="#222" style={{ transform: 'scaleX(-1)' }} />Nhập tại đây để tìm kiếm</SearchBox>
        <TaskButton $w={59}><TaskViewIcon /></TaskButton>
        <TaskButton $w={51} $ml={10} $bar><VscVscode size={32} color="#1e9de8" /></TaskButton>
        <TaskButton $w={61} $ml={6} $on $bar><ChromeLogo><ChromeBadge>N</ChromeBadge></ChromeLogo></TaskButton>
        <TaskButton $w={51} $ml={6} $bar><FigmaTile><FigmaMark /></FigmaTile></TaskButton>
        <Tray>
          <TrayItem $w={50} $center><CloudTray /></TrayItem>
          <TrayItem $w={122}>24°C&nbsp; Có mây</TrayItem>
          <TrayItem $w={30} $center><ChevronUp size={20} /></TrayItem>
          <TrayItem $w={30} $center><Wifi size={17} /></TrayItem>
          <TrayItem $w={28} $center><OneDriveIcon /></TrayItem>
          <TrayItem $w={30} $center><Volume2 size={18} /></TrayItem>
          <EngLabel $w={48} $center>ENG</EngLabel>
          <Clock><span>4:47 CH</span><span>12/10/2021</span></Clock>
          <TrayItem $w={62} $center><NotifyIcon /></TrayItem>
          <TrayItem $w={9} />
        </Tray>
      </Taskbar>
    </Page>
  );
}
